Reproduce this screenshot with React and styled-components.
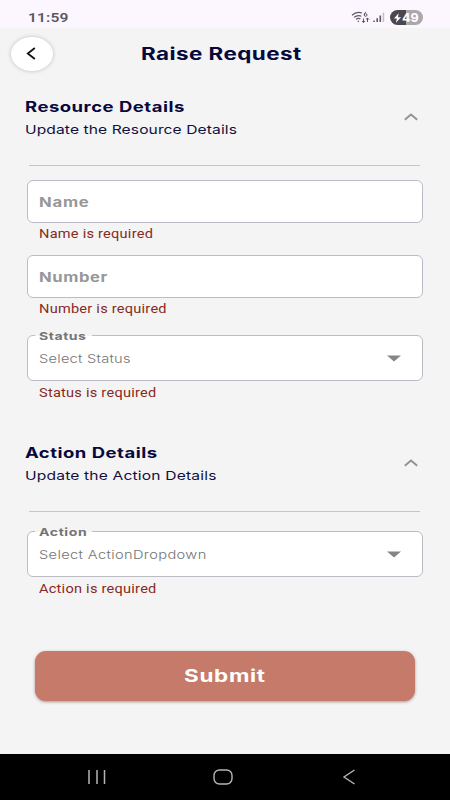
import React from 'react';
import styled, { createGlobalStyle } from 'styled-components';

const GlobalStyle = createGlobalStyle`
  * { box-sizing: border-box; }
  body { margin: 0; background: #f4f4f4; font-family: Inter, "Liberation Sans", sans-serif; }
`;

const Screen = styled.div`
  display: flex;
  flex-direction: column;
  width: 450px;
  height: 800px;
  overflow: hidden;
  background: #f4f4f4;
`;

const Text = styled.span`
  display: block;
  width: max-content;
  white-space: nowrap;
  transform-origin: ${(p) => p.$origin || 'left'} center;
  transform: scaleX(${(p) => p.$stretch || 1.32});
  letter-spacing: ${(p) => p.$spacing || 0}px;
`;

const StatusBar = styled.div`
  display: flex;
  align-items: center;
  flex: 0 0 28px;
  padding: 7px 27px 0 28px;
  background: #fcf7fe;
`;

const Time = styled(Text)`
  font: 600 13px/20px Roboto, sans-serif;
  color: #5d5761;
  margin-right: auto;
`;

const StatusIcon = styled.svg`
  display: block;
  margin-right: ${(p) => p.$gap || 0}px;
`;

const Battery = styled.div`
  display: flex;
  align-items: center;
  width: 33px;
  height: 15px;
  padding-left: 3px;
  border-radius: 8px;
  background: linear-gradient(90deg, #4b474d 49%, #aaa7ad 49%);
`;

const Charge = styled(Text)`
  font: 700 12px/15px Inter, sans-serif;
  color: #fff;
`;

const Header = styled.header`
  display: flex;
  align-items: center;
  height: 50px;
  padding: 1px 0 0 11px;
`;

const BackButton = styled.button`
  display: flex;
  align-items: center;
  justify-content: center;
  width: 42px;
  height: 34px;
  margin: 0 88px 0 0;
  padding: 0 2px 0 0;
  border: 0;
  border-radius: 50%;
  background: #fff;
  box-shadow: 0 0 4px rgba(0, 0, 0, 0.22);
`;

const PageTitle = styled(Text).attrs({ as: 'h1' })`
  margin: 0;
  font-size: 17px;
  font-weight: 700;
  line-height: 24px;
  color: #07083d;
`;

const Section = styled.section`
  margin-top: ${(p) => p.$top}px;
  padding: 0 27px;
`;

const SectionHead = styled.div`
  display: flex;
  align-items: center;
  justify-content: space-between;
  height: 44px;
  padding: 0 5px 0 0;
  margin-left: -2px;
`;

const SectionTitle = styled(Text).attrs({ as: 'h2' })`
  margin: 0;
  font-size: 14px;
  font-weight: 700;
  line-height: 22px;
  color: #07083d;
`;

const SectionNote = styled(Text)`
  font-size: 12px;
  font-weight: 400;
  line-height: 23px;
  color: #10113f;
`;

const Divider = styled.hr`
  height: 1px;
  margin: 25px 3px ${(p) => p.$bottom}px 2px;
  border: 0;
  background: #c3c4d4;
`;

const Field = styled.div`
  margin-bottom: ${(p) => p.$bottom || 0}px;
`;

const InputBox = styled.div`
  display: flex;
  align-items: center;
  height: 43px;
  padding-left: 11px;
  border: 1px solid #bcbcc8;
  border-radius: 6px;
  background: #fff;
`;

const Placeholder = styled(Text)`
  font-size: 13px;
  font-weight: 700;
  line-height: 20px;
  color: #979797;
`;

const SelectBox = styled.div`
  position: relative;
  display: flex;
  align-items: center;
  justify-content: space-between;
  height: 46px;
  padding: 0 21px 0 11px;
  border: 1px solid #bcbcc4;
  border-radius: 6px;
  background: #fff;
`;

const FloatingLabel = styled.div`
  position: absolute;
  top: -8px;
  left: 7px;
  width: 57px;
  height: 16px;
  padding-left: 4px;
  background: linear-gradient(#f4f4f4 8px, #fff 8px);
`;

const LabelText = styled(Text)`
  font-size: 11px;
  font-weight: 700;
  line-height: 17px;
  color: #747474;
`;

const SelectValue = styled(Text)`
  padding-top: 1px;
  font-size: 12px;
  font-weight: 300;
  line-height: 20px;
  color: #747474;
`;

const ErrorText = styled(Text)`
  margin-left: ${(p) => p.$indent || 11.5}px;
  font-family: Roboto, sans-serif;
  font-size: 13px;
  line-height: 22px;
  color: #862a25;
`;

const SubmitButton = styled.button`
  display: flex;
  align-items: center;
  justify-content: center;
  height: 50px;
  margin: 52px 35px 0;
  padding: 0;
  border: 0;
  border-radius: 11px;
  background: #c67a69;
  box-shadow: 0 1px 3px rgba(90, 50, 45, 0.5);
  font: 700 17px/24px Inter, sans-serif;
  color: #fff;
`;

const NavBar = styled.nav`
  display: flex;
  align-items: center;
  height: 46px;
  margin-top: auto;
  padding-left: 87px;
  gap: 106px;
  background: #000;
`;

const Chevron = () => (
  <svg width="14" height="10" viewBox="0 0 14 10" fill="none" stroke="#929292" strokeWidth="1.9">
    <path d="M.8 6.8 7 1.5l6.2 5.3" />
  </svg>
);

function Input({ label, spacing, error, errorSpacing, bottom }) {
  return (
    <Field $bottom={bottom}>
      <InputBox>
        <Placeholder $stretch={1.28} $spacing={spacing}>{label}</Placeholder>
      </InputBox>
      <ErrorText $stretch={1.12} $spacing={errorSpacing}>{error}</ErrorText>
    </Field>
  );
}

const SelectError = styled(ErrorText)`
  padding-top: 1px;
  margin-bottom: -1px;
`;

function Select({ label, labelSpacing, value, valueSpacing, error }) {
  return (
    <Field>
      <SelectBox>
        <FloatingLabel>
          <LabelText $stretch={1.28} $spacing={labelSpacing}>{label}</LabelText>
        </FloatingLabel>
        <SelectValue $stretch={1.22} $spacing={valueSpacing}>{value}</SelectValue>
        <svg width="14" height="7" viewBox="0 0 14 7"><path d="M0 .5h14L7 6.5z" fill="#858585" /></svg>
      </SelectBox>
      <SelectError $indent={12} $stretch={1.12} $spacing={0.22}>{error}</SelectError>
    </Field>
  );
}

function Heading({ title, note, noteSpacing }) {
  return (
    <SectionHead>
      <div>
        <SectionTitle $spacing={0.38}>{title}</SectionTitle>
        <SectionNote $stretch={1.3} $spacing={noteSpacing}>{note}</SectionNote>
      </div>
      <Chevron />
    </SectionHead>
  );
}

export default function App() {
  return (
    <Screen>
      <GlobalStyle />
      <StatusBar>
        <Time $stretch={1.2} $spacing={0.1}>11:59</Time>
        <StatusIcon $gap={3} width="19" height="13" viewBox="0 0 19 13" fill="none" stroke="#5d5761" strokeWidth="1.2">
          <path d="M1 4.2C4 1.3 8 .8 11 2M3 6.4c2.3-2 5-2.3 7.4-1.2M5 8.4c1.4-1.1 3-1.2 4.4-.4" />
          <circle cx="7.3" cy="10.2" r=".8" fill="#5d5761" stroke="none" />
          <path d="M15.2 1.2c-1.4.3-2 1.3-2 2.6M13.2 4a1.4 1.3 0 1 0 2.8 0 1.4 1.3 0 1 0-2.8 0" strokeWidth="1" />
          <path d="M12.5 7.5v4M10.9 10l1.6 1.6 1.6-1.6M16.5 11V7M14.9 8.6 16.5 7l1.6 1.6" strokeWidth="1" />
        </StatusIcon>
        <StatusIcon $gap={5} width="12" height="11" viewBox="0 0 12 11">
          <path d="M.3 8.5h1.5V10H.3zM3.4 6.3h1.6V10H3.4zM6.5 3.5h1.6V10H6.5z" fill="#5d5761" />
          <path d="M9.6.6h1.6V10H9.6z" fill="#c5c0c8" />
        </StatusIcon>
        <Battery>
          <svg width="9" height="10" viewBox="0 0 8 9"><path d="M5 .3.8 5h2.6L2.6 8.7 7.2 3.8H4.5z" fill="#fff" /></svg>
          <Charge $stretch={1.05}>49</Charge>
        </Battery>
      </StatusBar>
      <Header>
        <BackButton aria-label="Back">
          <svg width="10" height="13" viewBox="0 0 10 13" fill="none" stroke="#111" strokeWidth="1.8">
            <path d="M8.8 1 1.8 6.5l7 5.5" />
          </svg>
        </BackButton>
        <PageTitle $spacing={0.32}>Raise Request</PageTitle>
      </Header>
      <Section $top={18}>
        <Heading title="Resource Details" note="Update the Resource Details" noteSpacing={0.07} />
        <Divider $bottom={14} />
        <Input label="Name" spacing={0.6} error="Name is required" errorSpacing={0.22} bottom={10} />
        <Input label="Number" spacing={0.45} error="Number is required" errorSpacing={0.22} bottom={15} />
        <Select label="Status" labelSpacing={0.4} value="Select Status" valueSpacing={0.2} error="Status is required" />
      </Section>
      <Section $top={39}>
        <Heading title="Action Details" note="Update the Action Details" noteSpacing={0.13} />
        <Divider $bottom={19} />
        <Select label="Action" labelSpacing={0.45} value="Select ActionDropdown" valueSpacing={0.29} error="Action is required" />
      </Section>
      <SubmitButton>
        <Text $origin="center" $spacing={0.5}>Submit</Text>
      </SubmitButton>
      <NavBar>
        <svg width="20" height="16" viewBox="0 0 20 16"><path d="M2 1v14M10 1v14M17.5 1v14" stroke="#b5b5b5" strokeWidth="1.5" /></svg>
        <svg width="20" height="16" viewBox="0 0 20 16"><rect x="1" y="1" width="18" height="14" rx="5.5" fill="none" stroke="#b5b5b5" strokeWidth="1.4" /></svg>
        <svg width="17" height="16" viewBox="0 0 17 16"><path d="M15.5 1 5 8l10.5 7" fill="none" stroke="#b5b5b5" strokeWidth="1.4" /></svg>
      </NavBar>
    </Screen>
  );
}
